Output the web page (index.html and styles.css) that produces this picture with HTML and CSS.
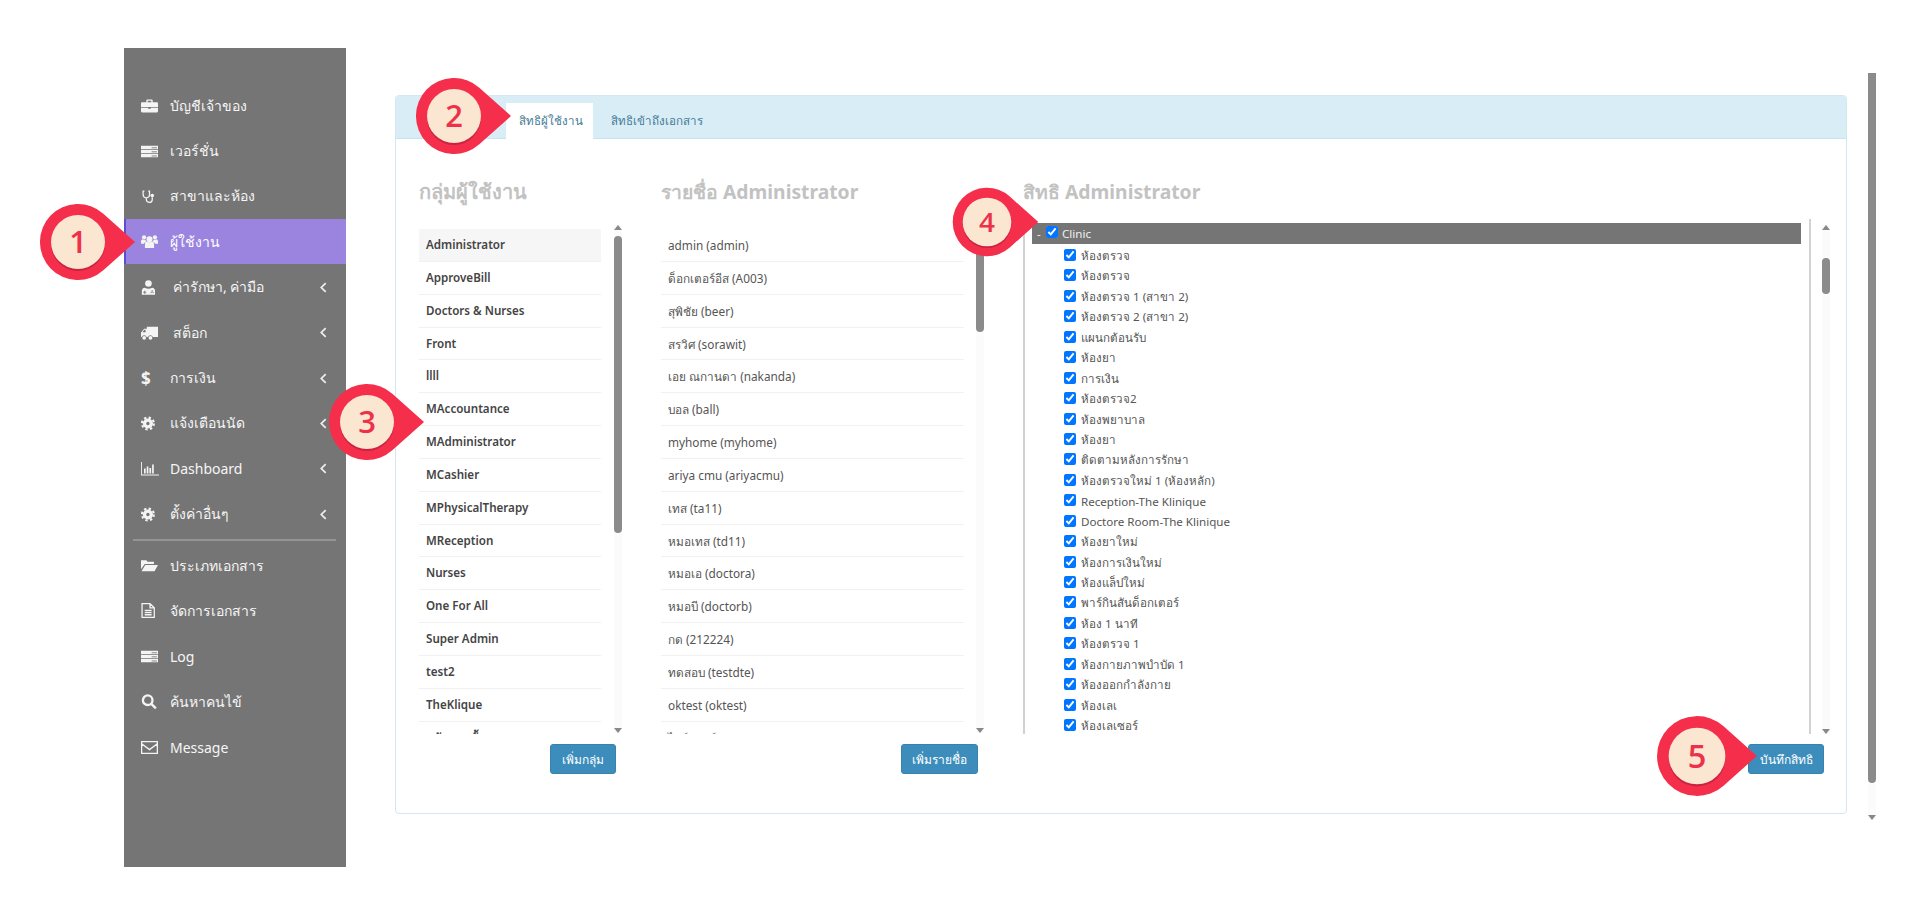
FILE: index.html
```html
<!DOCTYPE html>
<html lang="th">
<head>
<meta charset="utf-8">
<title>สิทธิผู้ใช้งาน</title>
<link rel="stylesheet" href="styles.css">
</head>
<body>
<div class="page">
  <nav class="sidebar">
    <a class="item"><svg class="ico" viewBox="0 0 16 16"><path d="M1 5h14a1 1 0 011 1v3.400H0V6a1 1 0 011-1zM5 5V3.300a1 1 0 011-1h4a1 1 0 011 1V5H9.700V3.500H6.300V5zM0 10h6.800v1h2.400v-1H16v3.500a1 1 0 01-1 1H1a1 1 0 01-1-1z"/></svg><span class="label">บัญชีเจ้าของ</span></a>
    <a class="item"><svg class="ico" viewBox="0 0 16 16"><path d="M0 2.500h16v3.100H0zM0 6.300h16v3.100H0zM0 10.100h16v3.400H0z"/><path class="notch" d="M10 4.500h5M10 8.300h5M10 12.200h5"/></svg><span class="label">เวอร์ชั่น</span></a>
    <a class="item"><svg class="ico" viewBox="0 0 16 16"><path class="line" d="M3.200 3H2v3.200a3 3 0 006 0V3H6.800M5 9.300v1.500a2.800 2.800 0 005.600 0V8.600"/><circle cx="10.600" cy="7" r="1.700"/></svg><span class="label">สาขาและห้อง</span></a>
    <a class="item active"><svg class="ico" viewBox="0 0 16 16"><circle cx="8" cy="5.800" r="2.800"/><circle cx="2.900" cy="4" r="2"/><circle cx="13.100" cy="4" r="2"/><path d="M3.700 14.200V10.500Q3.700 8.300 5.500 8q2.500 1.400 5 0 1.800.3 1.800 2.500v3.700zM0 10V8q0-1.900 1.400-2.200 1.100.8 2.700.6.300 1 1 1.500-2.100.8-2.200 2.100zM16 10V8q0-1.900-1.400-2.200-1.100.8-2.700.6-.3 1-1 1.500 2.100.8 2.200 2.100z"/></svg><span class="label">ผู้ใช้งาน</span></a>
    <a class="item wide"><svg class="ico" viewBox="0 0 16 16"><circle cx="7" cy="4.300" r="3.100"/><path d="M.8 14.800V11.300Q.8 8.600 3.500 8.200 7 10.300 10.500 8.200 13.200 8.600 13.200 11.300v3.500z"/><path class="notch" d="M3.500 11v3M5 12.500H2M10.500 10.500v1.200M9.300 13.300a1.200 1.200 0 012.400 0"/></svg><span class="label">ค่ารักษา, ค่ามือ</span><svg class="chev" viewBox="0 0 6 10"><path d="M5 1L1 5l4 4"/></svg></a>
    <a class="item wide"><svg class="ico" viewBox="0 0 16 16"><path d="M5.500 2.500H16v9.800h-4.800a2.500 2.500 0 00-4.700 0H5.300a2.500 2.500 0 00-4.700 0H0V8l3-3.500h2.500zM1.300 7.800h3V5.400H3.200z"/><circle cx="3" cy="13" r="1.800"/><circle cx="8.900" cy="13" r="1.800"/></svg><span class="label">สต็อก</span><svg class="chev" viewBox="0 0 6 10"><path d="M5 1L1 5l4 4"/></svg></a>
    <a class="item"><span class="ico dollar">$</span><span class="label">การเงิน</span><svg class="chev" viewBox="0 0 6 10"><path d="M5 1L1 5l4 4"/></svg></a>
    <a class="item"><svg class="ico" viewBox="0 0 16 16"><circle class="gear-ring" cx="6.500" cy="8" r="3.200"/><circle class="gear-teeth" cx="6.500" cy="8" r="5.600"/></svg><span class="label">แจ้งเตือนนัด</span><svg class="chev" viewBox="0 0 6 10"><path d="M5 1L1 5l4 4"/></svg></a>
    <a class="item"><svg class="ico ico-wide" viewBox="0 0 18 17"><path d="M0 2h.9v12.500H18v.9H0zM3 8.500h1.700v5H3zM5.700 6.500h1.700v7H5.700zM8.400 8h1.700v5.500H8.400zM11.100 4.500h1.700v9h-1.700z"/></svg><span class="label">Dashboard</span><svg class="chev" viewBox="0 0 6 10"><path d="M5 1L1 5l4 4"/></svg></a>
    <a class="item"><svg class="ico" viewBox="0 0 16 16"><circle class="gear-ring" cx="6.500" cy="8" r="3.200"/><circle class="gear-teeth" cx="6.500" cy="8" r="5.600"/></svg><span class="label">ตั้งค่าอื่นๆ</span><svg class="chev" viewBox="0 0 6 10"><path d="M5 1L1 5l4 4"/></svg></a>
    <div class="divider"></div>
    <a class="item"><svg class="ico" viewBox="0 0 16 16"><path d="M0 3h5l1.200 1.500h6V6.500H3.500L0 11.500zM4 7.500h12l-3.300 6H0.500z"/></svg><span class="label">ประเภทเอกสาร</span></a>
    <a class="item"><svg class="ico" viewBox="0 0 16 16"><path class="line" d="M1 1.500h7.500L12.500 5.500V14.500H1zM8.500 1.500V5.500H12.500M3.500 8h6.500M3.500 10h6.500M3.500 12h6.500"/></svg><span class="label">จัดการเอกสาร</span></a>
    <a class="item"><svg class="ico" viewBox="0 0 16 16"><path d="M0 2.500h16v3.100H0zM0 6.300h16v3.100H0zM0 10.100h16v3.400H0z"/><path class="notch" d="M10 4.500h5M10 8.300h5M10 12.200h5"/></svg><span class="label">Log</span></a>
    <a class="item"><svg class="ico" viewBox="0 0 16 16"><circle class="line bold" cx="6.300" cy="6.800" r="4.500"/><path class="line bold" d="M9.700 10.200L14 14.500"/></svg><span class="label">ค้นหาคนไข้</span></a>
    <a class="item"><svg class="ico" viewBox="0 0 16 16"><path class="line" d="M.6 2.500h14.800v11H.6zM.6 4.500L8 10l7.400-5.500"/></svg><span class="label">Message</span></a>
  </nav>

  <main class="main">
    <section class="panel">
      <header class="tabs">
        <a class="tab current">สิทธิผู้ใช้งาน</a>
        <a class="tab">สิทธิเข้าถึงเอกสาร</a>
      </header>
      <div class="columns">
        <div class="col col-groups">
          <h2 class="heading">กลุ่มผู้ใช้งาน</h2>
          <div class="scroller">
            <ul class="list bold-list">
              <li class="selected">Administrator</li>
              <li>ApproveBill</li>
              <li>Doctors &amp; Nurses</li>
              <li>Front</li>
              <li>llll</li>
              <li>MAccountance</li>
              <li>MAdministrator</li>
              <li>MCashier</li>
              <li>MPhysicalTherapy</li>
              <li>MReception</li>
              <li>Nurses</li>
              <li>One For All</li>
              <li>Super Admin</li>
              <li>test2</li>
              <li>TheKlique</li>
              <li>พนักงานทั้งหมด</li>
            </ul>
            <div class="sb sb-list"><i class="up"></i><b class="thumb thumb-groups"></b><i class="down"></i></div>
          </div>
          <div class="actions"><button class="btn btn-group">เพิ่มกลุ่ม</button></div>
        </div>
        <div class="col col-users">
          <h2 class="heading">รายชื่อ Administrator</h2>
          <div class="scroller">
            <ul class="list">
              <li>admin (admin)</li>
              <li>ด็อกเตอร์อีส (A003)</li>
              <li>สุพิชัย (beer)</li>
              <li>สรวิศ (sorawit)</li>
              <li>เอย ณกานดา (nakanda)</li>
              <li>บอล (ball)</li>
              <li>myhome (myhome)</li>
              <li>ariya cmu (ariyacmu)</li>
              <li>เทส (ta11)</li>
              <li>หมอเทส (td11)</li>
              <li>หมอเอ (doctora)</li>
              <li>หมอบี (doctorb)</li>
              <li>กด (212224)</li>
              <li>ทดสอบ (testdte)</li>
              <li>oktest (oktest)</li>
              <li>ไซร์ (ปาล์ม ทดสอบ)</li>
            </ul>
            <div class="sb sb-list"><i class="up"></i><b class="thumb thumb-users"></b><i class="down"></i></div>
          </div>
          <div class="actions"><button class="btn btn-user">เพิ่มรายชื่อ</button></div>
        </div>
        <div class="col col-rights">
          <h2 class="heading heading-tree">สิทธิ Administrator</h2>
          <div class="scroller">
            <div class="tree">
              <div class="tree-root"><span class="dash">-</span><input type="checkbox" checked><span>Clinic</span></div>
              <label class="node"><input type="checkbox" checked><span>ห้องตรวจ</span></label>
              <label class="node"><input type="checkbox" checked><span>ห้องตรวจ</span></label>
              <label class="node"><input type="checkbox" checked><span>ห้องตรวจ 1 (สาขา 2)</span></label>
              <label class="node"><input type="checkbox" checked><span>ห้องตรวจ 2 (สาขา 2)</span></label>
              <label class="node"><input type="checkbox" checked><span>แผนกต้อนรับ</span></label>
              <label class="node"><input type="checkbox" checked><span>ห้องยา</span></label>
              <label class="node"><input type="checkbox" checked><span>การเงิน</span></label>
              <label class="node"><input type="checkbox" checked><span>ห้องตรวจ2</span></label>
              <label class="node"><input type="checkbox" checked><span>ห้องพยาบาล</span></label>
              <label class="node"><input type="checkbox" checked><span>ห้องยา</span></label>
              <label class="node"><input type="checkbox" checked><span>ติดตามหลังการรักษา</span></label>
              <label class="node"><input type="checkbox" checked><span>ห้องตรวจใหม่ 1 (ห้องหลัก)</span></label>
              <label class="node"><input type="checkbox" checked><span>Reception-The Klinique</span></label>
              <label class="node"><input type="checkbox" checked><span>Doctore Room-The Klinique</span></label>
              <label class="node"><input type="checkbox" checked><span>ห้องยาใหม่</span></label>
              <label class="node"><input type="checkbox" checked><span>ห้องการเงินใหม่</span></label>
              <label class="node"><input type="checkbox" checked><span>ห้องแล็ปใหม่</span></label>
              <label class="node"><input type="checkbox" checked><span>พาร์กินสันด็อกเตอร์</span></label>
              <label class="node"><input type="checkbox" checked><span>ห้อง 1 นาที</span></label>
              <label class="node"><input type="checkbox" checked><span>ห้องตรวจ 1</span></label>
              <label class="node"><input type="checkbox" checked><span>ห้องกายภาพบำบัด 1</span></label>
              <label class="node"><input type="checkbox" checked><span>ห้องออกกำลังกาย</span></label>
              <label class="node"><input type="checkbox" checked><span>ห้องเลเ</span></label>
              <label class="node"><input type="checkbox" checked><span>ห้องเลเซอร์</span></label>
            </div>
            <div class="sb sb-tree"><i class="up"></i><b class="thumb thumb-tree"></b><i class="down"></i></div>
          </div>
          <div class="actions"><button class="btn btn-save">บันทึกสิทธิ</button></div>
        </div>
      </div>
    </section>
    <div class="sb sb-page"><b class="thumb thumb-page"></b><i class="down"></i></div>
  </main>

  <svg class="badge b1" viewBox="-40 -40 100 80"><path class="drop" d="M57 0L25.300 28.300A38 38 0 1 1 25.300-28.300z"/><circle class="under" cy="2" r="27"/><circle class="face" r="27"/><text class="num" y="11">1</text></svg>
  <svg class="badge b2" viewBox="-40 -40 100 80"><path class="drop" d="M57 0L25.300 28.300A38 38 0 1 1 25.300-28.300z"/><circle class="under" cy="2" r="27"/><circle class="face" r="27"/><text class="num" y="11">2</text></svg>
  <svg class="badge b3" viewBox="-40 -40 100 80"><path class="drop" d="M57 0L25.300 28.300A38 38 0 1 1 25.300-28.300z"/><circle class="under" cy="2" r="27"/><circle class="face" r="27"/><text class="num" y="11">3</text></svg>
  <svg class="badge b4" viewBox="-40 -40 100 80"><path class="drop" d="M57 0L25.300 28.300A38 38 0 1 1 25.300-28.300z"/><circle class="under" cy="2" r="27"/><circle class="face" r="27"/><text class="num" y="11">4</text></svg>
  <svg class="badge b5" viewBox="-40 -40 100 80"><path class="drop" d="M57 0L25.300 28.300A38 38 0 1 1 25.300-28.300z"/><circle class="under" cy="2" r="27"/><circle class="face" r="27"/><text class="num" y="11">5</text></svg>
</div>
</body>
</html>
```
FILE: styles.css
```css
* { box-sizing: border-box; }
html, body { margin: 0; height: 100%; background: #fff; overflow: hidden; }
body { font-family: "Noto Sans", "Noto Sans CJK SC", sans-serif; font-size: 12px; color: #555; }

.page { position: relative; display: flex; align-items: flex-start; height: 916px; padding: 48px 0 0 124px; }

/* Sidebar */
.sidebar { flex: none; width: 222px; height: 819px; padding-top: 35px; background: #757575; display: flex; flex-direction: column; }
.item { display: flex; align-items: center; height: 45.400px; padding-left: 17px; color: #f6f6f6; font-size: 14px; flex: none; }
.item .ico { flex: none; width: 17px; height: 17px; margin-right: 12px; fill: #f4f4f4; }
.item .ico-wide { width: 18px; margin-right: 11px; }
.item.wide .ico { margin-right: 15px; }
.item .label { flex: 1; white-space: nowrap; }
.item .chev { flex: none; width: 7px; height: 11px; margin-right: 19px; fill: none; stroke: #eee; stroke-width: 1.6; }
.item.active { background: #9a84df; border-left: 2px solid #5b4fd0; padding: 1px 0 0 15px; height: 44.400px; margin-bottom: 1px; color: #fff; }
.ico .line { fill: none; stroke: #f4f4f4; stroke-width: 1.2; }
.ico .line.bold { stroke-width: 2.200; }
.ico .notch { fill: none; stroke: #757575; stroke-width: .8; }
.ico .gear-ring { fill: none; stroke: #f4f4f4; stroke-width: 3.200; }
.ico .gear-teeth { fill: none; stroke: #f4f4f4; stroke-width: 2; stroke-dasharray: 2.200 2.200; }
.ico.dollar { display: block; font-size: 17px; font-weight: 700; line-height: 17px; color: #f4f4f4; }
.divider { flex: none; height: 2px; margin: 2px 10px 2px 9px; background: #949494; }

/* Main */
.main { flex: none; display: flex; align-items: flex-start; padding-left: 49px; }
.panel { flex: none; width: 1452px; height: 719px; margin-top: 47px; border: 1px solid #d3e8ef; border-radius: 4px; }
.tabs { display: flex; align-items: flex-end; height: 43px; padding-left: 110px; background: #d9edf6; border-bottom: 1px solid #c8e3f0; border-radius: 3px 3px 0 0; }
.tab { display: block; height: 36px; margin-bottom: -1px; padding: 0 13px; line-height: 35px; font-size: 11.600px; color: #437a96; white-space: nowrap; }
.tab.current { width: 87px; background: #fff; margin-right: 5px; }

.columns { display: flex; padding: 38px 0 0 23px; }
.col { flex: none; display: flex; flex-direction: column; }
.col-groups { width: 203px; margin-right: 39px; }
.col-users { width: 323px; margin-right: 39px; }
.col-rights { width: 808px; }
.heading { margin: 0 0 22px; height: 30px; line-height: 30px; font-size: 19.300px; font-weight: 700; color: #c2c2c2; white-space: nowrap; }
.col-groups .heading { font-size: 20px; }
.heading-tree { margin-bottom: 12px; }

.scroller { display: flex; height: 505px; }
.col-rights .scroller { height: 515px; }
.list { flex: 1; margin: 0; padding: 0; list-style: none; overflow: hidden; }
.list li { height: 32.850px; line-height: 32px; padding-left: 7px; border-bottom: 1px solid #f1f1f1; color: #555; font-size: 11.800px; white-space: nowrap; }
.bold-list li { font-size: 11.600px; font-weight: 600; color: #444; }
.list li.selected { background: #f6f6f6; }
.col-groups .list { margin-right: 13px; }
.col-users .list { margin-right: 12px; }

/* Fake scrollbars */
.sb { flex: none; display: flex; flex-direction: column; align-items: center; width: 8px; background: #fbfbfb; }
.sb-list { height: 508px; margin-top: -4px; }
.sb-tree { height: 509px; margin: 6px 0 0 11px; }
.sb-page { height: 747px; margin: 25px 0 0 21px; }
.thumb { display: block; width: 8px; background: #8b8b8b; border-radius: 4px; }
.up, .down { display: block; flex: none; width: 0; height: 0; border-left: 4px solid transparent; border-right: 4px solid transparent; }
.up { border-bottom: 5px solid #888; }
.down { margin-top: auto; border-top: 5px solid #888; }
.thumb-groups { height: 297px; margin-top: 6px; }
.thumb-users { height: 96px; margin-top: 6px; }
.thumb-tree { height: 36px; margin-top: 28px; }
.thumb-page { height: 710px; border-radius: 0 0 4px 4px; }

/* Tree */
.tree { flex: none; width: 788px; padding: 4px 8px 0 7px; border-left: 2px solid #d2d2d2; border-right: 2px solid #d2d2d2; overflow: hidden; font-size: 11.600px; }
.tree-root { display: flex; align-items: center; height: 21px; margin-bottom: 1.800px; padding-left: 5px; background: #757575; color: #f0f0f0; }
.tree-root .dash { width: 9px; }
.tree-root input { margin: -4px 4px 0 0; }
.node { display: flex; align-items: center; height: 20.450px; padding-left: 32px; color: #555; white-space: nowrap; }
.node input { margin: -2px 5px 0 0; }
.tree input { flex: none; width: 12px; height: 12px; }

/* Buttons */
.actions { display: flex; justify-content: flex-end; margin-top: 10px; }
.btn { display: block; height: 30px; padding: 0; border: 1px solid #3783b0; border-radius: 3px; background: #3c8dbc; color: #fff; font: 500 12px "Noto Sans", sans-serif; white-space: nowrap; }
.btn-group { width: 66px; margin-right: 6px; }
.btn-user { width: 77px; margin-right: 6px; }
.btn-save { width: 76px; margin-right: 7px; }

/* Callout badges */
.badge { position: absolute; overflow: visible; }
.drop { fill: #f42e4b; }
.under { fill: #c9233f; }
.face { fill: #fae6d1; }
.num { fill: #ee3049; font: 600 31px "Open Sans", sans-serif; text-anchor: middle; }
.b1 { left: 38px; top: 202px; width: 100px; height: 80px; }
.b2 { left: 414px; top: 76px; width: 100px; height: 80px; }
.b3 { left: 327px; top: 382px; width: 100px; height: 80px; }
.b4 { left: 951px; top: 186px; width: 90px; height: 72px; }
.b5 { left: 1655px; top: 714px; width: 105px; height: 84px; }
```
